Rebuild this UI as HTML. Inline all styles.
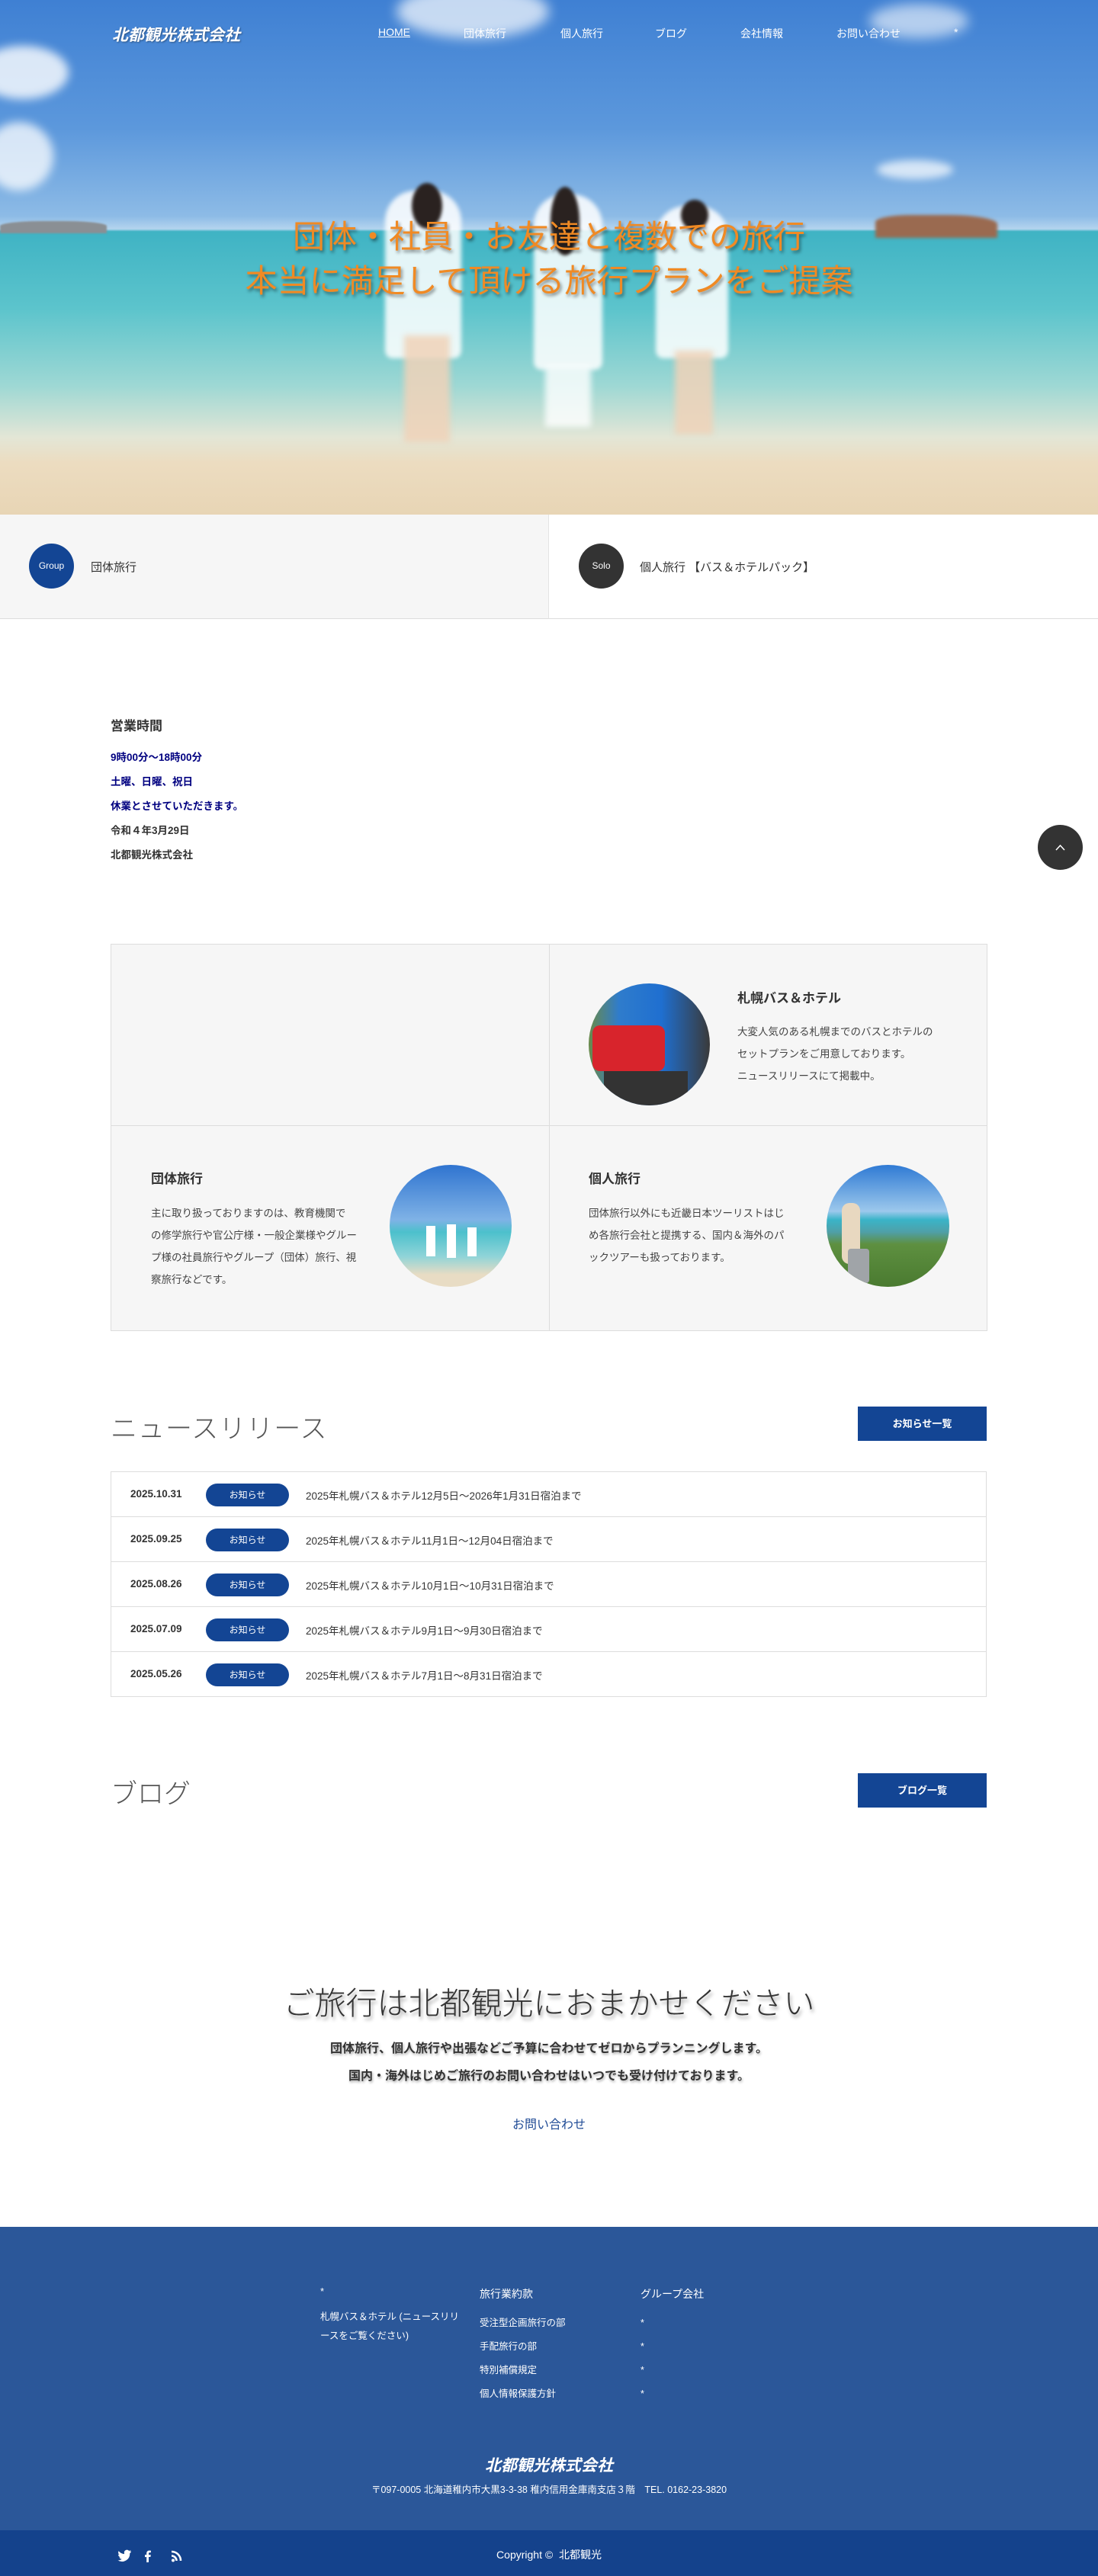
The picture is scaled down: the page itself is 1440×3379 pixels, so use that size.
<!DOCTYPE html>
<html lang="ja"><head><meta charset="utf-8">
<style>
*{margin:0;padding:0;box-sizing:border-box}
body{width:1440px;height:3379px;position:relative;font-family:"Liberation Sans","Noto Sans CJK JP",sans-serif;color:#333;background:#fff;overflow:hidden}
.a{position:absolute}
.hero{left:0;top:0;width:1440px;height:675px;overflow:hidden;
background:linear-gradient(180deg,#3f80d3 0%,#5c98dc 25%,#8dbbe6 42%,#b4d4ee 44.5%,#3fb3c4 45%,#5cc4cc 60%,#9ed8d4 75%,#e3e6d6 85%,#ecdcc0 90%,#e8d5b5 100%)}
.nav{top:34px;font-size:14px;color:#fff}
.hero h1{position:absolute;left:0;width:1440px;text-align:center;top:282px;font-size:42px;line-height:58px;font-weight:normal;color:#f08a24;text-shadow:2px 3px 4px rgba(0,0,0,.45)}
.circ{border-radius:50%;overflow:hidden}
.g p{font-size:13.5px;line-height:29px;color:#444}
.g h3{font-size:17px;font-weight:bold;color:#333}
.row{left:145px;width:1149px;height:59px;border:1px solid #ddd;border-top:none;font-size:14px}
.row .d{position:absolute;left:25px;top:21px;font-weight:bold;font-size:13.5px}
.row .b{position:absolute;left:124px;top:15px;width:109px;height:30px;border-radius:15px;background:#134594;color:#fff;font-size:12px;text-align:center;line-height:30px}
.row .t{position:absolute;left:255px;top:20px;color:#333;font-size:13.5px}
.btn{background:#134594;color:#fff;font-size:13px;text-align:center;font-weight:bold}
.fw{color:#fff;font-size:13px}
</style></head><body>
<div class="a hero">
 <div class="a" style="left:-30px;top:60px;width:120px;height:70px;border-radius:50%;background:rgba(255,255,255,.8);filter:blur(6px)"></div>
 <div class="a" style="left:-20px;top:160px;width:90px;height:90px;border-radius:50%;background:rgba(255,255,255,.75);filter:blur(6px)"></div>
 <div class="a" style="left:520px;top:-20px;width:200px;height:70px;border-radius:50%;background:rgba(255,255,255,.7);filter:blur(8px)"></div>
 <div class="a" style="left:1140px;top:5px;width:130px;height:45px;border-radius:50%;background:rgba(255,255,255,.6);filter:blur(8px)"></div>
 <div class="a" style="left:1150px;top:210px;width:100px;height:25px;border-radius:50%;background:rgba(255,255,255,.7);filter:blur(5px)"></div>
 <div class="a" style="left:1148px;top:282px;width:160px;height:30px;background:#9a6a50;border-radius:30% 40% 0 0;filter:blur(2px)"></div>
 <div class="a" style="left:0;top:290px;width:140px;height:16px;background:#8a8f94;border-radius:40% 40% 0 0;filter:blur(1px)"></div>
 <div class="a" style="left:505px;top:250px;width:100px;height:220px;background:rgba(255,255,255,.85);border-radius:40px 40px 10px 10px;filter:blur(3px)"></div>
 <div class="a" style="left:530px;top:440px;width:60px;height:140px;background:rgba(240,210,185,.85);filter:blur(4px)"></div>
 <div class="a" style="left:700px;top:255px;width:90px;height:230px;background:rgba(255,255,255,.85);border-radius:40px 40px 10px 10px;filter:blur(3px)"></div>
 <div class="a" style="left:715px;top:480px;width:60px;height:80px;background:rgba(255,255,255,.8);filter:blur(4px)"></div>
 <div class="a" style="left:860px;top:270px;width:95px;height:200px;background:rgba(255,255,255,.85);border-radius:40px 40px 10px 10px;filter:blur(3px)"></div>
 <div class="a" style="left:885px;top:460px;width:50px;height:110px;background:rgba(240,210,185,.85);filter:blur(4px)"></div>
 <div class="a" style="left:540px;top:240px;width:40px;height:60px;background:#2a2220;border-radius:50%;filter:blur(2px)"></div>
 <div class="a" style="left:722px;top:245px;width:38px;height:90px;background:#2a2220;border-radius:50%;filter:blur(2px)"></div>
 <div class="a" style="left:893px;top:262px;width:36px;height:40px;background:#2a2220;border-radius:50%;filter:blur(2px)"></div>
 <div class="a" style="left:147px;top:30px;font-size:21px;font-weight:bold;font-style:italic;color:#fff;text-shadow:1px 1px 2px rgba(0,0,0,.4)">北都観光株式会社</div>
 <div class="a nav" style="left:496px;text-decoration:underline">HOME</div>
 <div class="a nav" style="left:608px">団体旅行</div>
 <div class="a nav" style="left:735px">個人旅行</div>
 <div class="a nav" style="left:859px">ブログ</div>
 <div class="a nav" style="left:971px">会社情報</div>
 <div class="a nav" style="left:1097px">お問い合わせ</div>
 <div class="a nav" style="left:1251px">*</div>
 <h1>団体・社員・お友達と複数での旅行<br>本当に満足して頂ける旅行プランをご提案</h1>
</div>
<div class="a" style="left:0;top:675px;width:720px;height:137px;background:#f6f6f6;border-bottom:1px solid #ddd;border-right:1px solid #e4e4e4"></div>
<div class="a" style="left:720px;top:675px;width:720px;height:137px;background:#fff;border-bottom:1px solid #ddd"></div>
<div class="a circ" style="left:38px;top:713px;width:59px;height:59px;background:#134594;color:#fff;font-size:12px;text-align:center;line-height:59px">Group</div>
<div class="a" style="left:119px;top:733px;font-size:15px">団体旅行</div>
<div class="a circ" style="left:759px;top:713px;width:59px;height:59px;background:#333;color:#fff;font-size:12px;text-align:center;line-height:59px">Solo</div>
<div class="a" style="left:839px;top:733px;font-size:15px">個人旅行 【バス＆ホテルパック】</div>

<div class="a" style="left:145px;top:938px;font-size:17px;font-weight:bold;color:#333">営業時間</div>
<div class="a" style="left:145px;top:978px;font-size:13.5px;font-weight:bold;color:#000080;line-height:32px">9時00分～18時00分<br>土曜、日曜、祝日<br>休業とさせていただきます。</div>
<div class="a" style="left:145px;top:1074px;font-size:13.5px;font-weight:bold;color:#333;line-height:32px">令和４年3月29日<br>北都観光株式会社</div>
<div class="a circ" style="left:1361px;top:1082px;width:59px;height:59px;background:#333;color:#fff;text-align:center">
<svg width="59" height="59" viewBox="0 0 59 59"><path d="M24 33l5.5-6 5.5 6" stroke="#fff" stroke-width="1.5" fill="none"/></svg></div>

<div class="a g" style="left:145px;top:1238px;width:1150px;height:508px;background:#f6f6f6;border:1px solid #ddd">
 <div class="a" style="left:574px;top:0;width:1px;height:506px;background:#ddd"></div>
 <div class="a" style="left:0;top:237px;width:1148px;height:1px;background:#ddd"></div>
 <div class="a circ" style="left:626px;top:51px;width:159px;height:160px;background:linear-gradient(90deg,#6a8a4a 0%,#2f7ccc 25%,#1f6fd0 60%,#3a3a3a 100%)">
  <div class="a" style="left:5px;top:55px;width:95px;height:60px;background:#d8242c;border-radius:10px"></div>
  <div class="a" style="left:20px;top:115px;width:110px;height:45px;background:#333"></div>
 </div>
 <div class="a" style="left:821px;top:56px"><h3>札幌バス＆ホテル</h3></div>
 <div class="a" style="left:821px;top:100px"><p>大変人気のある札幌までのバスとホテルの<br>セットプランをご用意しております。<br>ニュースリリースにて掲載中。</p></div>
 <div class="a" style="left:52px;top:293px"><h3>団体旅行</h3></div>
 <div class="a" style="left:52px;top:338px"><p>主に取り扱っておりますのは、教育機関で<br>の修学旅行や官公庁様・一般企業様やグルー<br>プ様の社員旅行やグループ（団体）旅行、視<br>察旅行などです。</p></div>
 <div class="a circ" style="left:365px;top:289px;width:160px;height:160px;background:linear-gradient(180deg,#2f74d0 0%,#7fb2e6 45%,#4cc0cc 55%,#8fd4d8 75%,#e8dcc4 90%)">
  <div class="a" style="left:48px;top:80px;width:12px;height:40px;background:#fff"></div>
  <div class="a" style="left:75px;top:78px;width:12px;height:44px;background:#fff"></div>
  <div class="a" style="left:102px;top:82px;width:12px;height:38px;background:#fff"></div>
 </div>
 <div class="a" style="left:626px;top:293px"><h3>個人旅行</h3></div>
 <div class="a" style="left:626px;top:338px"><p>団体旅行以外にも近畿日本ツーリストはじ<br>め各旅行会社と提携する、国内＆海外のパ<br>ックツアーも扱っております。</p></div>
 <div class="a circ" style="left:938px;top:289px;width:161px;height:160px;background:linear-gradient(180deg,#2f7ad4 0%,#9cc8ec 38%,#3ab4c8 45%,#4fa0a8 55%,#5e9040 65%,#4a7a30 100%)">
  <div class="a" style="left:20px;top:50px;width:24px;height:80px;background:#e8d8c0;border-radius:10px"></div>
  <div class="a" style="left:28px;top:110px;width:28px;height:45px;background:#a0a4a8;border-radius:4px"></div>
 </div>
</div>

<div class="a" style="left:145px;top:1846px;font-size:35px;font-weight:300;color:#555;letter-spacing:1px">ニュースリリース</div>
<div class="a btn" style="left:1125px;top:1845px;width:169px;height:45px;line-height:45px">お知らせ一覧</div>
<div class="a" style="left:145px;top:1930px;width:1149px;height:1px;background:#ddd"></div>
<div class="a row" style="top:1931px"><span class="d">2025.10.31</span><span class="b">お知らせ</span><span class="t">2025年札幌バス＆ホテル12月5日～2026年1月31日宿泊まで</span></div>
<div class="a row" style="top:1990px"><span class="d">2025.09.25</span><span class="b">お知らせ</span><span class="t">2025年札幌バス＆ホテル11月1日～12月04日宿泊まで</span></div>
<div class="a row" style="top:2049px"><span class="d">2025.08.26</span><span class="b">お知らせ</span><span class="t">2025年札幌バス＆ホテル10月1日～10月31日宿泊まで</span></div>
<div class="a row" style="top:2108px"><span class="d">2025.07.09</span><span class="b">お知らせ</span><span class="t">2025年札幌バス＆ホテル9月1日～9月30日宿泊まで</span></div>
<div class="a row" style="top:2167px"><span class="d">2025.05.26</span><span class="b">お知らせ</span><span class="t">2025年札幌バス＆ホテル7月1日～8月31日宿泊まで</span></div>

<div class="a" style="left:145px;top:2325px;font-size:35px;font-weight:300;color:#555">ブログ</div>
<div class="a btn" style="left:1125px;top:2326px;width:169px;height:45px;line-height:45px">ブログ一覧</div>

<div class="a" style="left:0;top:2594px;width:1440px;text-align:center;font-size:41px;font-weight:300;color:#333;text-shadow:2px 4px 5px rgba(0,0,0,.35)">ご旅行は北都観光におまかせください</div>
<div class="a" style="left:0;top:2670px;width:1440px;text-align:center;font-size:16px;font-weight:bold;line-height:36px;color:#333;text-shadow:1px 2px 3px rgba(0,0,0,.35)">団体旅行、個人旅行や出張などご予算に合わせてゼロからプランニングします。<br>国内・海外はじめご旅行のお問い合わせはいつでも受け付けております。</div>
<div class="a" style="left:0;top:2773px;width:1440px;text-align:center;font-size:16px;color:#1e4a95">お問い合わせ</div>

<div class="a" style="left:0;top:2921px;width:1440px;height:398px;background:#2b5799"></div>
<div class="a fw" style="left:420px;top:2998px">*</div>
<div class="a fw" style="left:420px;top:3027px;line-height:25px;font-size:12.5px">札幌バス＆ホテル (ニュースリリ<br>ースをご覧ください)</div>
<div class="a fw" style="left:629px;top:2999px;font-size:14px">旅行業約款</div>
<div class="a fw" style="left:629px;top:3032px;line-height:31px;font-size:12.5px">受注型企画旅行の部<br>手配旅行の部<br>特別補償規定<br>個人情報保護方針</div>
<div class="a fw" style="left:840px;top:2999px;font-size:14px">グループ会社</div>
<div class="a fw" style="left:840px;top:3032px;line-height:31px;font-size:12.5px">*<br>*<br>*<br>*</div>
<div class="a" style="left:0;top:3218px;width:1440px;text-align:center;font-size:21px;font-weight:bold;font-style:italic;color:#fff">北都観光株式会社</div>
<div class="a fw" style="left:0;top:3255px;width:1440px;text-align:center;font-size:12.5px">〒097-0005 北海道稚内市大黒3-3-38 稚内信用金庫南支店３階　TEL. 0162-23-3820</div>
<div class="a" style="left:0;top:3319px;width:1440px;height:60px;background:#14428c"></div>
<svg class="a" style="left:153px;top:3343px" width="90" height="20" viewBox="0 0 90 20">
<path d="M19 3.5c-.7.3-1.4.5-2.1.6.8-.5 1.3-1.2 1.6-2-.7.4-1.5.7-2.3.9A3.6 3.6 0 0 0 10 6.3c0 .3 0 .6.1.8-3-.1-5.7-1.600-7.5-3.8-.3.5-.5 1.1-.5 1.8 0 1.3.6 2.4 1.6 3-.6 0-1.1-.2-1.600-.4 0 1.8 1.2 3.2 2.9 3.6-.5.2-1.1.2-1.6.1.5 1.4 1.8 2.5 3.4 2.5A7.3 7.3 0 0 1 1.4 15.4 10.3 10.3 0 0 0 17.3 6.6v-.5c.7-.5 1.3-1.1 1.7-1.8z" fill="#fff"/>
<path d="M42 18v-7h2.4l.4-2.8H42V6.5c0-.8.2-1.3 1.4-1.3h1.5V2.7c-.3 0-1.1-.1-2.1-.1-2.1 0-3.6 1.3-3.6 3.7v2H37v2.8h2.2v7z" fill="#fff"/>
<circle cx="74" cy="15.5" r="2" fill="#fff"/><path d="M72 9.5a6.5 6.5 0 0 1 6.5 6.5M72 4a12 12 0 0 1 12 12" stroke="#fff" stroke-width="2.6" fill="none"/>
</svg>
<div class="a fw" style="left:0;top:3341px;width:1440px;text-align:center;font-size:14px">Copyright ©&nbsp; 北都観光</div>
</body></html>
